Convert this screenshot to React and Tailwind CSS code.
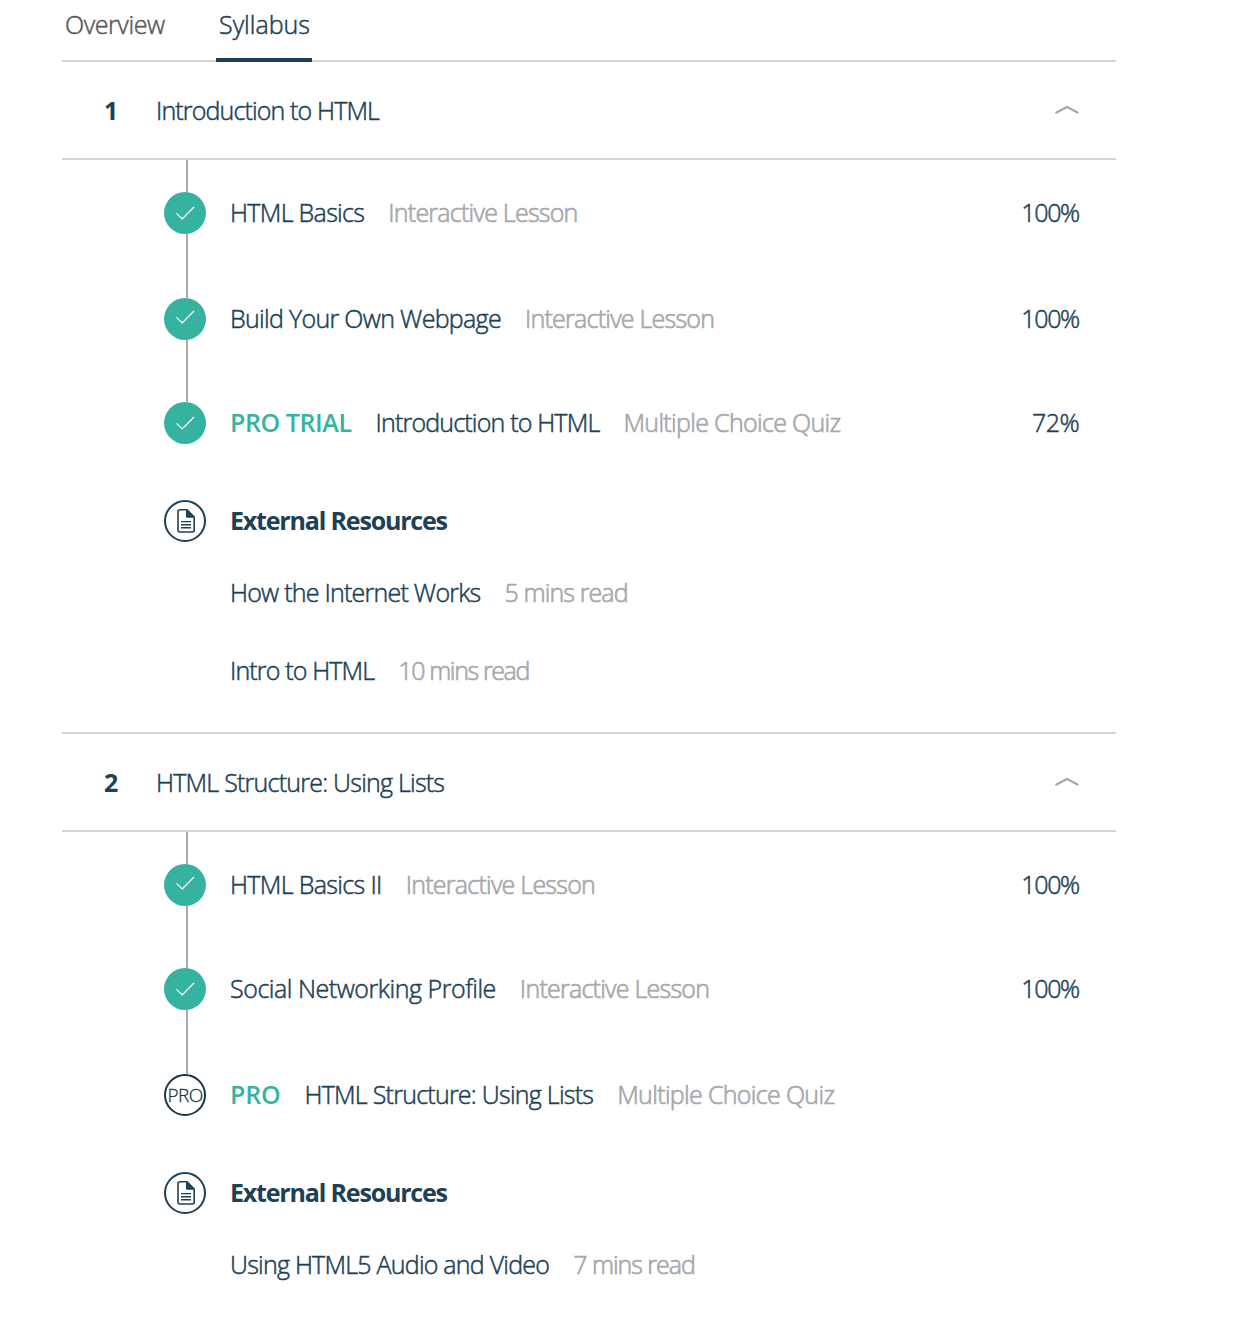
import React from "react";

const sections = [
  {
    number: "1",
    title: "Introduction to HTML",
    titleClass: "tracking-[-0.86px]",
    lessons: [
      { line: "h-8", title: "HTML Basics", titleClass: "tracking-[-0.68px]", meta: "Interactive Lesson", metaClass: "tracking-[-0.76px]", score: "100%", scoreClass: "tracking-[-1.3px]" },
      { line: "h-16", raised: true, title: "Build Your Own Webpage", titleClass: "tracking-[-0.69px]", meta: "Interactive Lesson", metaClass: "tracking-[-0.76px]", score: "100%", scoreClass: "tracking-[-1.3px]" },
      { line: "h-[62px]", badge: "PRO TRIAL", badgeClass: "tracking-[-0.42px]", title: "Introduction to HTML", titleClass: "tracking-[-0.82px]", meta: "Multiple Choice Quiz", metaClass: "tracking-[-0.68px]", score: "72%", scoreClass: "tracking-[-0.6px]" },
    ],
    resources: [
      { title: "How the Internet Works", titleClass: "tracking-[-0.76px]", meta: "5 mins read", metaClass: "tracking-[-0.89px]" },
      { title: "Intro to HTML", titleClass: "tracking-[-0.85px]", meta: "10 mins read", metaClass: "tracking-[-1.38px]" },
    ],
  },
  {
    number: "2",
    title: "HTML Structure: Using Lists",
    titleClass: "tracking-[-0.77px]",
    lessons: [
      { line: "h-8", raised: true, title: "HTML Basics II", titleClass: "tracking-[-0.65px]", meta: "Interactive Lesson", metaClass: "tracking-[-0.76px]", score: "100%", scoreClass: "tracking-[-1.3px]" },
      { line: "h-[62px]", title: "Social Networking Profile", titleClass: "tracking-[-0.46px]", meta: "Interactive Lesson", metaClass: "tracking-[-0.76px]", score: "100%", scoreClass: "tracking-[-1.3px]" },
      { line: "h-16", pro: true, badge: "PRO", badgeClass: "tracking-[-0.2px]", title: "HTML Structure: Using Lists", titleClass: "tracking-[-0.75px]", meta: "Multiple Choice Quiz", metaClass: "tracking-[-0.67px]" },
    ],
    resources: [
      { title: "Using HTML5 Audio and Video", titleClass: "tracking-[-0.77px]", meta: "7 mins read", metaClass: "tracking-[-1.03px]" },
    ],
  },
];

function CheckIcon({ raised }) {
  return (
    <svg className="block size-[42px] shrink-0" viewBox="0 0 42 42" fill="none">
      <circle cx="21" cy="21" r="21" fill="#35b3a0" />
      <path d={raised ? "M12.5 19.3 18.2 25 30 13" : "M12.5 21.3 18.2 27 30 15"} stroke="#fff" strokeWidth="1.1" />
    </svg>
  );
}

function ProIcon() {
  return (
    <span className="flex size-[42px] shrink-0 items-center justify-center rounded-full border-2 border-[#1b3547] text-[19px] leading-none font-light tracking-[-0.6px] text-[#1b3547] [-webkit-text-stroke:0.3px]">
      PRO
    </span>
  );
}

function DocumentIcon() {
  return (
    <svg className="block size-[42px] shrink-0" viewBox="0 0 42 42" fill="none" stroke="#204056">
      <circle cx="21" cy="21" r="20" strokeWidth="2" />
      <path d="M23 9.8H16a2 2 0 0 0-2 2V30a2 2 0 0 0 2 2H28.2a2 2 0 0 0 2-2V17Z" strokeWidth="1.6" />
      <path d="M22.5 9.5V17.2H30.5Z" fill="#204056" strokeWidth="1" />
      <path d="M17 21.6H27M17 24.7H27M17 27.8H27" strokeWidth="1.4" />
    </svg>
  );
}

function Chevron() {
  return (
    <svg className="mr-px block h-3 w-6" viewBox="0 0 24 12" fill="none">
      <path d="M0.5 9 12 3 23.5 9" stroke="#a5a7aa" strokeWidth="2" />
    </svg>
  );
}

function Lesson({ lesson }) {
  return (
    <li>
      <div className={`ml-[22px] w-0.5 bg-[#a7a9ac] ${lesson.line}`} />
      <div className="flex h-[42px] items-center">
        {lesson.pro ? <ProIcon /> : <CheckIcon raised={lesson.raised} />}
        <div className="ml-6 flex flex-1 gap-6 pb-0.5">
          {lesson.badge && (
            <span className={`font-semibold text-[#35b3a0] [-webkit-text-stroke:0px] ${lesson.badgeClass}`}>{lesson.badge}</span>
          )}
          <span className={lesson.titleClass}>{lesson.title}</span>
          <span className={`text-[#a7a9ac] [-webkit-text-stroke:0.7px] ${lesson.metaClass}`}>{lesson.meta}</span>
        </div>
        {lesson.score && <span className={`pr-px pb-0.5 ${lesson.scoreClass}`}>{lesson.score}</span>}
      </div>
    </li>
  );
}

function Section({ section }) {
  return (
    <section>
      <header className="flex h-[98px] items-center border-b-2 border-[#d4d4d4] pr-9 pl-[42px]">
        <span className="w-[52px] font-bold [-webkit-text-stroke:0px]">{section.number}</span>
        <h2 className={`flex-1 ${section.titleClass}`}>{section.title}</h2>
        <Chevron />
      </header>
      <ul className="pr-9 pl-[102px]">
        {section.lessons.map((lesson) => (
          <Lesson key={lesson.title} lesson={lesson} />
        ))}
      </ul>
      <div className="mt-14 pb-10 pl-[102px]">
        <div className="flex h-[42px] items-center gap-6">
          <DocumentIcon />
          <h3 className="pb-0.5 font-bold tracking-[-1.18px] [-webkit-text-stroke:0px]">External Resources</h3>
        </div>
        <ul className="mt-[30px] flex flex-col gap-9 pl-[66px]">
          {section.resources.map((item) => (
            <li key={item.title} className="flex h-[42px] items-center gap-6 pb-0.5">
              <span className={item.titleClass}>{item.title}</span>
              <span className={`text-[#a7a9ac] [-webkit-text-stroke:0.7px] ${item.metaClass}`}>{item.meta}</span>
            </li>
          ))}
        </ul>
      </div>
    </section>
  );
}

export default function App() {
  return (
    <main className="h-[1320px] overflow-hidden bg-white font-['Open_Sans',sans-serif] text-[25px] leading-[42px] font-light whitespace-nowrap text-[#204056] [-webkit-text-stroke:0.5px]">
      <div className="ml-[62px] w-[1054px]">
        <nav className="flex h-[62px] items-start border-b-2 border-[#d4d4d4]">
          <a className="ml-[3px] w-[151px] pt-[3px] tracking-[-0.42px] text-[#58595b]">Overview</a>
          <a className="h-[62px] w-24 border-b-4 border-[#204056] pt-[3px] pl-[3px]">Syllabus</a>
        </nav>
        <div className="divide-y-2 divide-[#d4d4d4]">
          {sections.map((section) => (
            <Section key={section.number} section={section} />
          ))}
        </div>
      </div>
    </main>
  );
}
